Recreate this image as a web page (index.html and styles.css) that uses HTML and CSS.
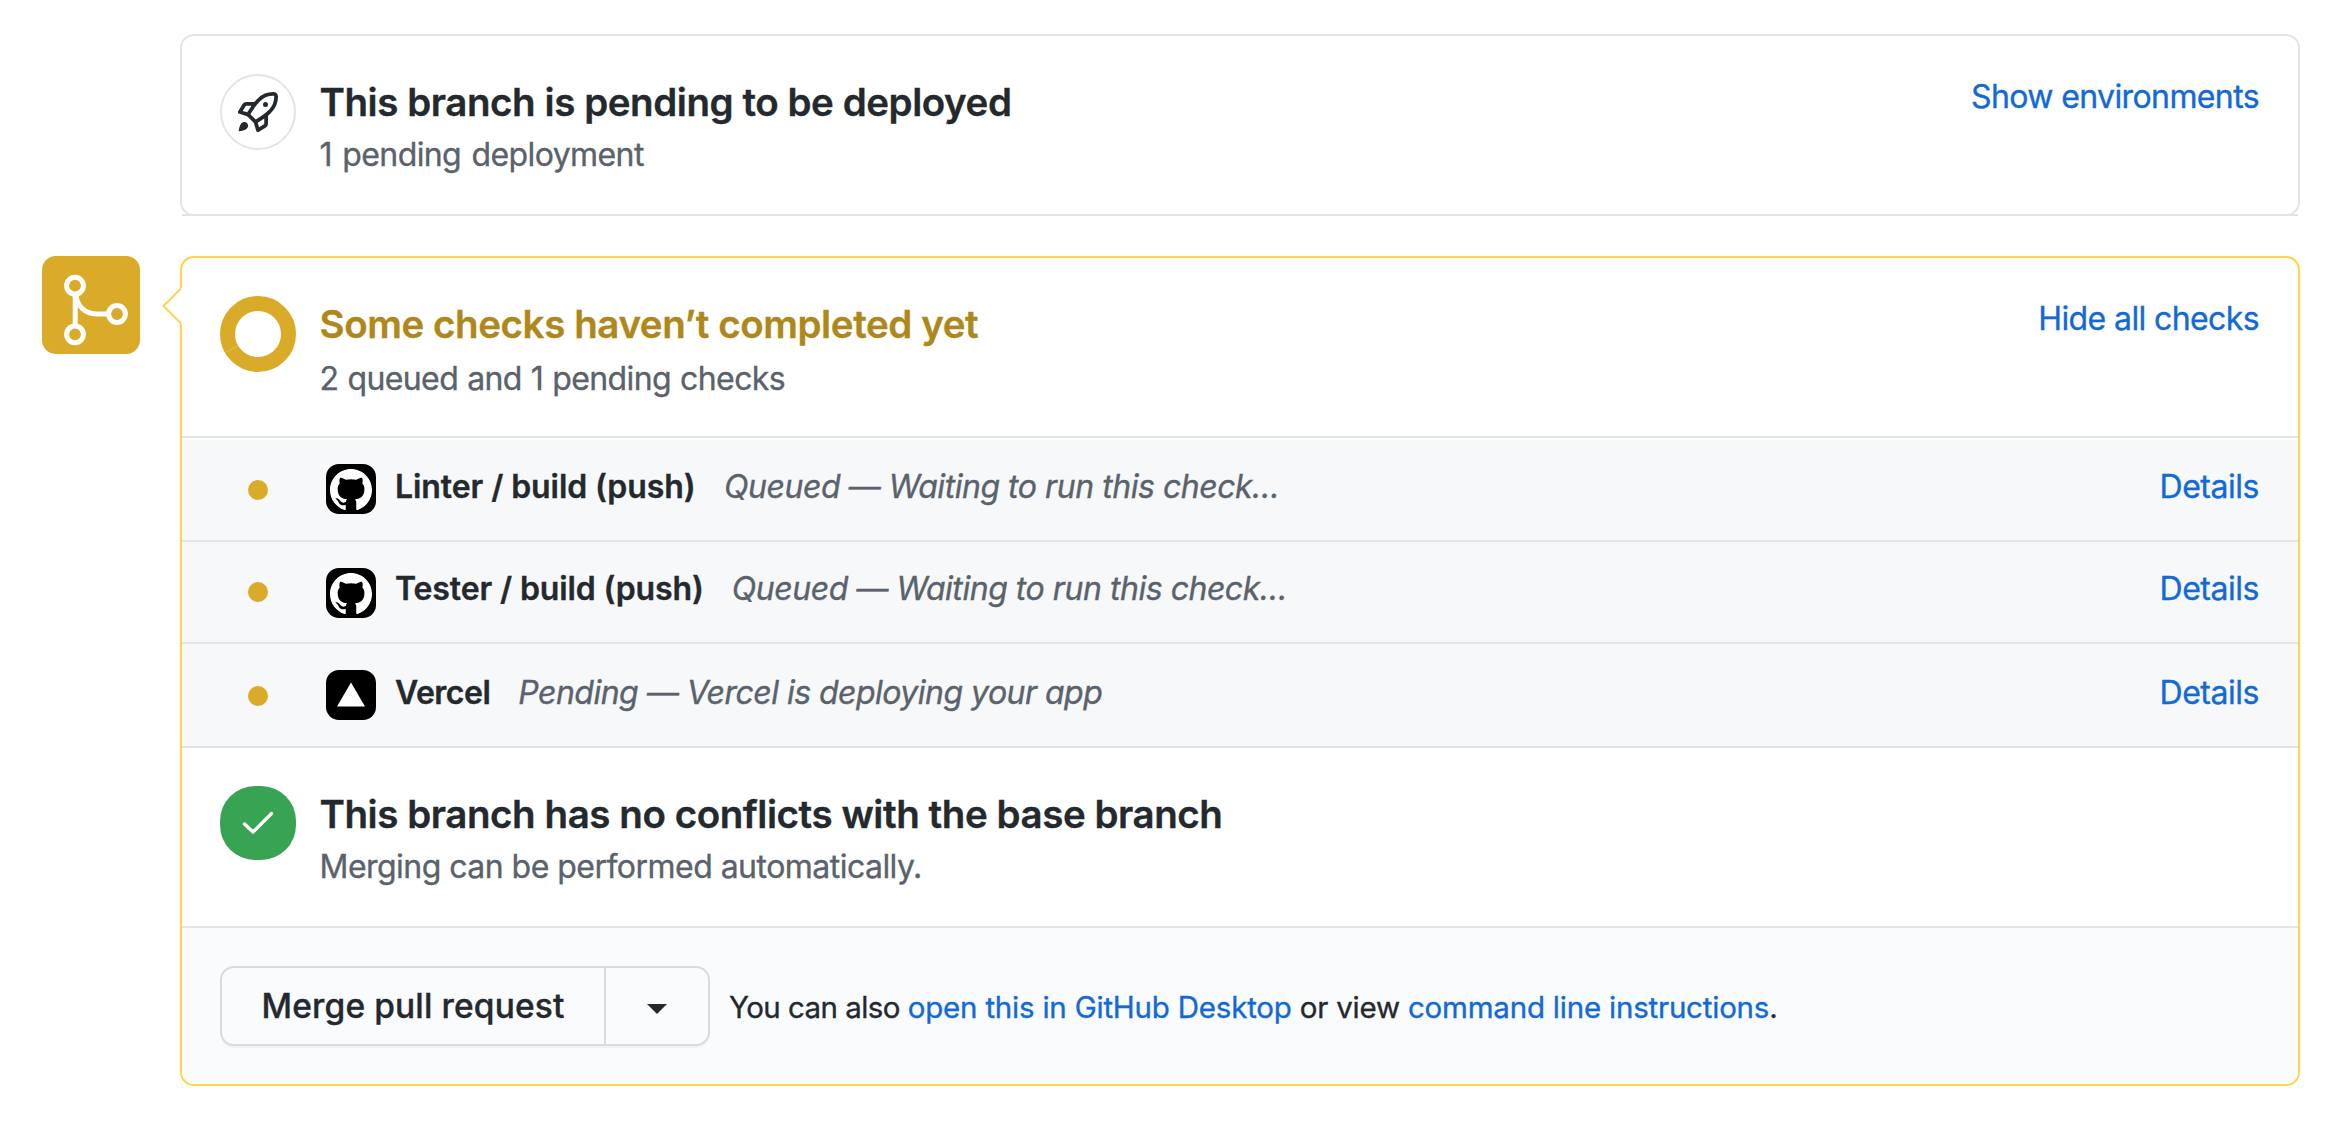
FILE: index.html
```html
<!DOCTYPE html>
<html lang="en">
<head>
<meta charset="utf-8">
<title>Pull request checks</title>
<link rel="stylesheet" href="styles.css">
</head>
<body>
<svg class="sprite" aria-hidden="true">
  <symbol id="mark" viewBox="0 0 16 16"><path d="M8 0C3.58 0 0 3.58 0 8c0 3.54 2.29 6.53 5.47 7.59.4.07.55-.17.55-.38 0-.19-.01-.82-.01-1.49-2.01.37-2.53-.49-2.69-.94-.09-.23-.48-.94-.82-1.13-.28-.15-.68-.52-.01-.53.63-.01 1.08.58 1.23.82.72 1.21 1.87.87 2.33.66.07-.52.28-.87.51-1.07-1.78-.2-3.64-.89-3.64-3.95 0-.87.31-1.59.82-2.15-.08-.2-.36-1.02.08-2.12 0 0 .67-.21 2.2.82.64-.18 1.32-.27 2-.27.68 0 1.36.09 2 .27 1.53-1.04 2.2-.82 2.2-.82.44 1.1.16 1.92.08 2.12.51.56.82 1.27.82 2.15 0 3.07-1.87 3.75-3.65 3.95.29.25.54.73.54 1.48 0 1.07-.01 1.93-.01 2.2 0 .21.15.46.55.38A8.013 8.013 0 0016 8c0-4.42-3.58-8-8-8z"/></symbol>
</svg>
<main class="timeline">
  <section class="card card-deploy">
    <div class="item item-deploy">
      <span class="status status-outline">
        <svg class="rocket" viewBox="0 0 16 16"><path fill-rule="evenodd" d="M14.064 0a8.75 8.75 0 00-6.187 2.563l-.459.458c-.314.314-.616.641-.904.979H3.31a1.75 1.75 0 00-1.49.833L.11 7.607a.75.75 0 00.418 1.11l3.102.954c.037.051.079.1.124.145l2.429 2.428c.046.046.094.088.145.125l.954 3.102a.75.75 0 001.11.418l2.774-1.707a1.75 1.75 0 00.833-1.49V9.485c.338-.288.665-.59.979-.904l.458-.459A8.75 8.75 0 0016 1.936V1.75A1.75 1.75 0 0014.25 0h-.186zM10.5 10.625c-.088.06-.177.118-.266.175l-2.35 1.521.548 1.783 1.949-1.2a.25.25 0 00.119-.213v-2.066zM3.678 8.116L5.2 5.766c.058-.09.117-.178.176-.266H3.309a.25.25 0 00-.213.119l-1.2 1.95 1.782.547zm5.26-4.493A7.25 7.25 0 0114.063 1.5h.186a.25.25 0 01.25.25v.186a7.25 7.25 0 01-2.123 5.127l-.459.458a15.21 15.21 0 01-2.499 2.02l-2.317 1.5-2.143-2.143 1.5-2.317a15.25 15.25 0 012.02-2.5l.458-.458h.002zM12 5a1 1 0 11-2 0 1 1 0 012 0zm-8.44 9.56a1.5 1.5 0 10-2.12-2.12c-.734.73-1.047 2.332-1.15 3.003a.23.23 0 00.265.265c.671-.103 2.273-.416 3.005-1.148z"/></svg>
      </span>
      <div class="copy">
        <h3 class="title">This branch is pending to be deployed</h3>
        <p class="sub sub-deploy">1 pending deployment</p>
      </div>
      <a class="link toggle">Show environments</a>
    </div>
  </section>

  <div class="merge-row">
    <span class="badge">
      <svg width="98" height="98" viewBox="0 0 98 98" fill="none" stroke="#fff" stroke-width="5"><circle cx="33" cy="29.7" r="8.4"/><circle cx="33" cy="78.3" r="8.4"/><circle cx="75" cy="58" r="8.4"/><path d="M33.2 38v32M34 38C34.5 50 43 58 55 58h12"/></svg>
    </span>
    <section class="card card-merge">
      <svg class="pointer" width="22" height="40" viewBox="0 0 22 40"><path d="M22 1.500L3 20l19 18.500z" fill="#fff"/><path d="M21 2.500L3.500 20l17.500 17.500" fill="none" stroke="#ffd34e" stroke-width="2"/></svg>
      <div class="item">
        <svg class="status" viewBox="0 0 76 76"><circle cx="38" cy="38" r="30.5" fill="none" stroke="#d9ab29" stroke-width="15"/><path d="M5.500 56.500L18 50" stroke="#e6c468" stroke-width=".8"/></svg>
        <div class="copy">
          <h3 class="title title-pending">Some checks haven’t completed yet</h3>
          <p class="sub sub-checks">2 queued and 1 pending checks</p>
        </div>
        <a class="link toggle">Hide all checks</a>
      </div>

      <div class="checks">
        <div class="check check-first">
          <span class="dot"></span>
          <span class="app"><svg class="mark"><use href="#mark"/></svg></span>
          <strong class="name">Linter / build (push)</strong>
          <em class="state">Queued — Waiting to run this check…</em>
          <a class="link details">Details</a>
        </div>
        <div class="check">
          <span class="dot"></span>
          <span class="app"><svg class="mark"><use href="#mark"/></svg></span>
          <strong class="name">Tester / build (push)</strong>
          <em class="state">Queued — Waiting to run this check…</em>
          <a class="link details">Details</a>
        </div>
        <div class="check check-last">
          <span class="dot"></span>
          <span class="app"><svg width="50" height="50" viewBox="0 0 50 50"><path fill="#fff" d="M25 12.500L39 36.500H11z"/></svg></span>
          <strong class="name name-vercel">Vercel</strong>
          <em class="state state-vercel">Pending — Vercel is deploying your app</em>
          <a class="link details">Details</a>
        </div>
      </div>

      <div class="item">
        <span class="status status-ok">
          <svg width="76" height="74" viewBox="0 0 76 74"><path d="M24.500 38l8.500 8L51.500 27.500" fill="none" stroke="#fff" stroke-width="3.300" stroke-linecap="round" stroke-linejoin="round"/></svg>
        </span>
        <div class="copy">
          <h3 class="title">This branch has no conflicts with the base branch</h3>
          <p class="sub sub-merge">Merging can be performed automatically.</p>
        </div>
      </div>

      <div class="actions">
        <div class="btn-group">
          <button class="btn">Merge pull request</button>
          <button class="btn btn-menu" aria-label="Select merge method"><span class="caret"></span></button>
        </div>
        <p class="hint"><span class="lead">You can also </span><a class="link">open this in GitHub Desktop</a> or view <a class="link">command line instructions</a>.</p>
      </div>
    </section>
  </div>
</main>
</body>
</html>
```
FILE: styles.css
```css
* { box-sizing: border-box; }

body {
  margin: 0;
  background: #fff;
  color: #24292e;
  font-family: Inter, "Liberation Sans", sans-serif;
  font-size: 32px;
  line-height: 42px;
  letter-spacing: -0.5px;
  -webkit-text-stroke: 0.35px;
}

svg { display: block; }
.sprite { display: none; }
h3, p { margin: 0; }

.timeline {
  display: flex;
  flex-direction: column;
  gap: 40px;
  padding: 34px 36px 40px 42px;
}

.card {
  border: 2px solid #e1e4e8;
  border-radius: 14px;
  background: #fff;
}
.card-deploy { height: 182px; margin-left: 138px; }
.card-merge {
  position: relative;
  flex: 1;
  height: 830px;
  border-color: #ffd34e;
}

.merge-row { display: flex; align-items: flex-start; gap: 40px; }

.badge {
  width: 98px;
  height: 98px;
  border-radius: 14px;
  background: #d9ab29;
}

.pointer { position: absolute; left: -22px; top: 28px; }

.item {
  display: flex;
  align-items: flex-start;
  height: 180px;
  padding: 38px 39px 0 38px;
  border-bottom: 2px solid #e1e4e8;
}

.status { flex: none; width: 76px; height: 76px; }
.status-outline {
  display: flex;
  align-items: center;
  justify-content: center;
  border: 2px solid #e1e4e8;
  border-radius: 50%;
}
.status-ok { height: 74px; border-radius: 35px; background: #37a353; }
.rocket { width: 40px; height: 40px; fill: #24292e; }

.copy { flex: 1; margin-left: 23.5px; padding-top: 3px; }
.title {
  font-size: 38.5px;
  font-weight: 600;
  line-height: 50px;
  letter-spacing: -0.435px;
}
.title-pending { color: #af881c; letter-spacing: -0.41px; }
.sub { margin-top: 7px; color: #5a626b; letter-spacing: -0.53px; }
.sub-deploy { letter-spacing: -0.6px; word-spacing: 2px; }
.sub-checks { margin-top: 9px; letter-spacing: -0.6px; word-spacing: 0.6px; }

.link { color: #1369d6; }
.toggle { margin-top: 2px; letter-spacing: -0.61px; }

.checks { padding-top: 2px; }
.check {
  display: flex;
  align-items: flex-start;
  height: 102px;
  padding: 26px 39px 0 66px;
  border-bottom: 2px solid #e1e4e8;
  background: #f6f8fa;
}
.check-first { padding-top: 24px; }
.check-last { height: 104px; }
.dot {
  width: 20px;
  height: 20px;
  margin: 14px 58px 0 0;
  border-radius: 50%;
  background: #d9ab29;
}
.check-first .dot, .check-last .dot { margin-top: 16px; }
.app {
  width: 50px;
  height: 50px;
  margin-right: 19px;
  border-radius: 13px;
  background: #000;
}
.mark { width: 42px; height: 42px; margin: 5px 4px; fill: #fff; }
.name { font-weight: 600; letter-spacing: -0.12px; margin-right: 28px; }
.check-first .name { letter-spacing: -0.08px; margin-right: 28.5px; }
.check .name-vercel { letter-spacing: -0.5px; }
.state { font-style: italic; color: #5a626b; letter-spacing: -0.466px; }
.state-vercel { letter-spacing: -0.52px; }
.details { margin-left: auto; letter-spacing: -0.47px; }
.check-first .name, .check-first .state, .check-first .details,
.check-last .name, .check-last .state, .check-last .details { margin-top: 2px; }

.actions {
  display: flex;
  align-items: flex-start;
  height: 154px;
  padding: 38px;
  border-radius: 0 0 10px 10px;
  background: #fafbfd;
}
.btn-group {
  display: flex;
  height: 80px;
  border: 2px solid #d9dbde;
  border-radius: 14px;
  box-shadow: 0 2px 1px rgba(27, 31, 35, .04);
}
.btn {
  width: 382px;
  margin: 0;
  padding: 0 0 1px;
  border: 0;
  background: none;
  color: #24292e;
  font: 500 33.5px/42px Inter, "Liberation Sans", sans-serif;
  letter-spacing: 0.13px;
}
.btn-menu {
  display: flex;
  align-items: center;
  justify-content: center;
  width: 104px;
  border-left: 2px solid #d9dbde;
}
.caret {
  margin-top: 7px;
  border: 10px solid transparent;
  border-top-color: #24292e;
  border-bottom: 0;
}
.hint { margin: 20px 0 0 19px; font-size: 29.5px; letter-spacing: -0.21px; }
.lead { letter-spacing: -0.55px; }
```
